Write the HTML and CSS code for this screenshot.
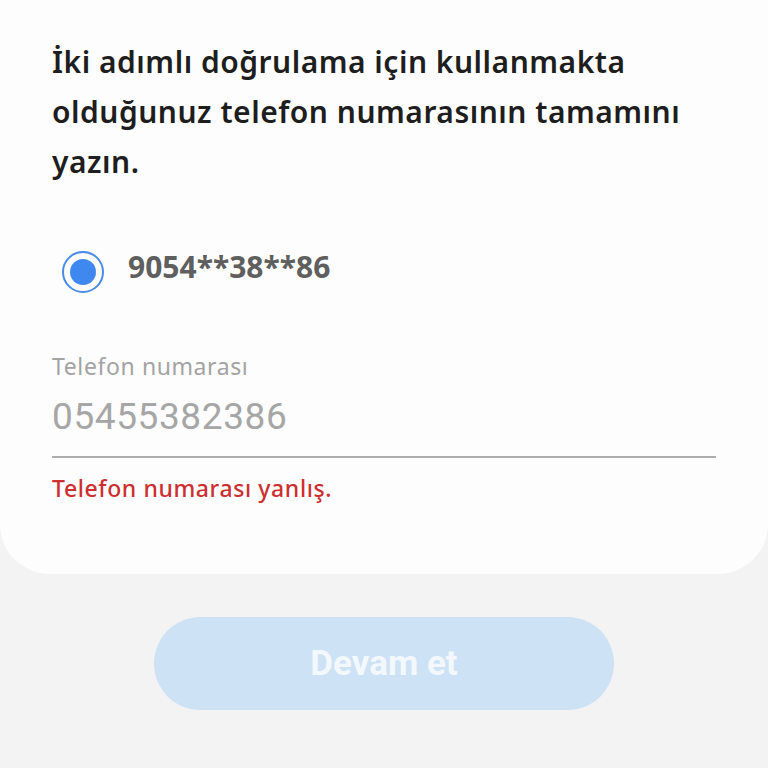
FILE: index.html
```html
<!DOCTYPE html>
<html lang="tr">
<head>
<meta charset="UTF-8">
<meta name="viewport" content="width=device-width, initial-scale=1.0">
<title>İki adımlı doğrulama</title>
<link rel="stylesheet" href="styles.css">
</head>
<body>
<div class="card">
  <h1 class="title">İki adımlı doğrulama için kullanmakta olduğunuz telefon numarasının tamamını yazın.</h1>

  <div class="radio-row">
    <span class="radio"><span class="radio-dot"></span></span>
    <span class="masked-number">9054**38**86</span>
  </div>

  <div class="field">
    <div class="field-label">Telefon numarası</div>
    <div class="field-input">05455382386</div>
    <div class="field-error">Telefon numarası yanlış.</div>
  </div>
</div>

<div class="button-row">
  <button class="next-button" disabled>Devam et</button>
</div>
</body>
</html>
```

FILE: styles.css
```css
/* styles.css */
body {
  margin: 0;
  padding: 0;
  background-color: #f3f3f3;
  font-family: "Noto Sans", Roboto, sans-serif;
}

.card {
  background-color: #fdfdfd;
  border-radius: 0 0 50px 50px;
  padding: 37px 52px 73px;
}

.title {
  margin: 0;
  font-size: 30px;
  font-weight: 600;
  line-height: 50px;
  letter-spacing: 0.5px;
  color: #1e1e1e;
}

.radio-row {
  display: flex;
  align-items: center;
  margin-top: 64px;
  margin-left: 10px;
}

.radio {
  width: 38px;
  height: 38px;
  border: 2px solid #4a8be8;
  border-radius: 50%;
  display: flex;
  justify-content: center;
  align-items: center;
}

.radio-dot {
  width: 26px;
  height: 26px;
  border-radius: 50%;
  background-color: #3e88f0;
}

.masked-number {
  margin-left: 24px;
  margin-bottom: 11px;
  font-size: 30px;
  font-weight: 700;
  line-height: 30px;
  color: #5f5f5f;
}

.field {
  margin-top: 59px;
}

.field-label {
  font-size: 23px;
  line-height: 28px;
  letter-spacing: 0.6px;
  color: #a3a3a3;
}

.field-input {
  margin-top: 15px;
  padding-bottom: 17px;
  font-family: Roboto, sans-serif;
  font-size: 37px;
  line-height: 44px;
  letter-spacing: 0.6px;
  color: #a6a6a6;
  border-bottom: 2px solid #acacac;
}

.field-error {
  margin-top: 17px;
  font-size: 23px;
  font-weight: 500;
  line-height: 26px;
  letter-spacing: 0.6px;
  color: #cc2f2f;
}

.button-row {
  display: flex;
  justify-content: center;
  margin-top: 43px;
}

.next-button {
  width: 460px;
  height: 93px;
  border: none;
  border-radius: 47px;
  background-color: #cde2f5;
  color: #f3f8fd;
  font-family: Roboto, sans-serif;
  font-size: 35px;
  font-weight: 700;
}
```
